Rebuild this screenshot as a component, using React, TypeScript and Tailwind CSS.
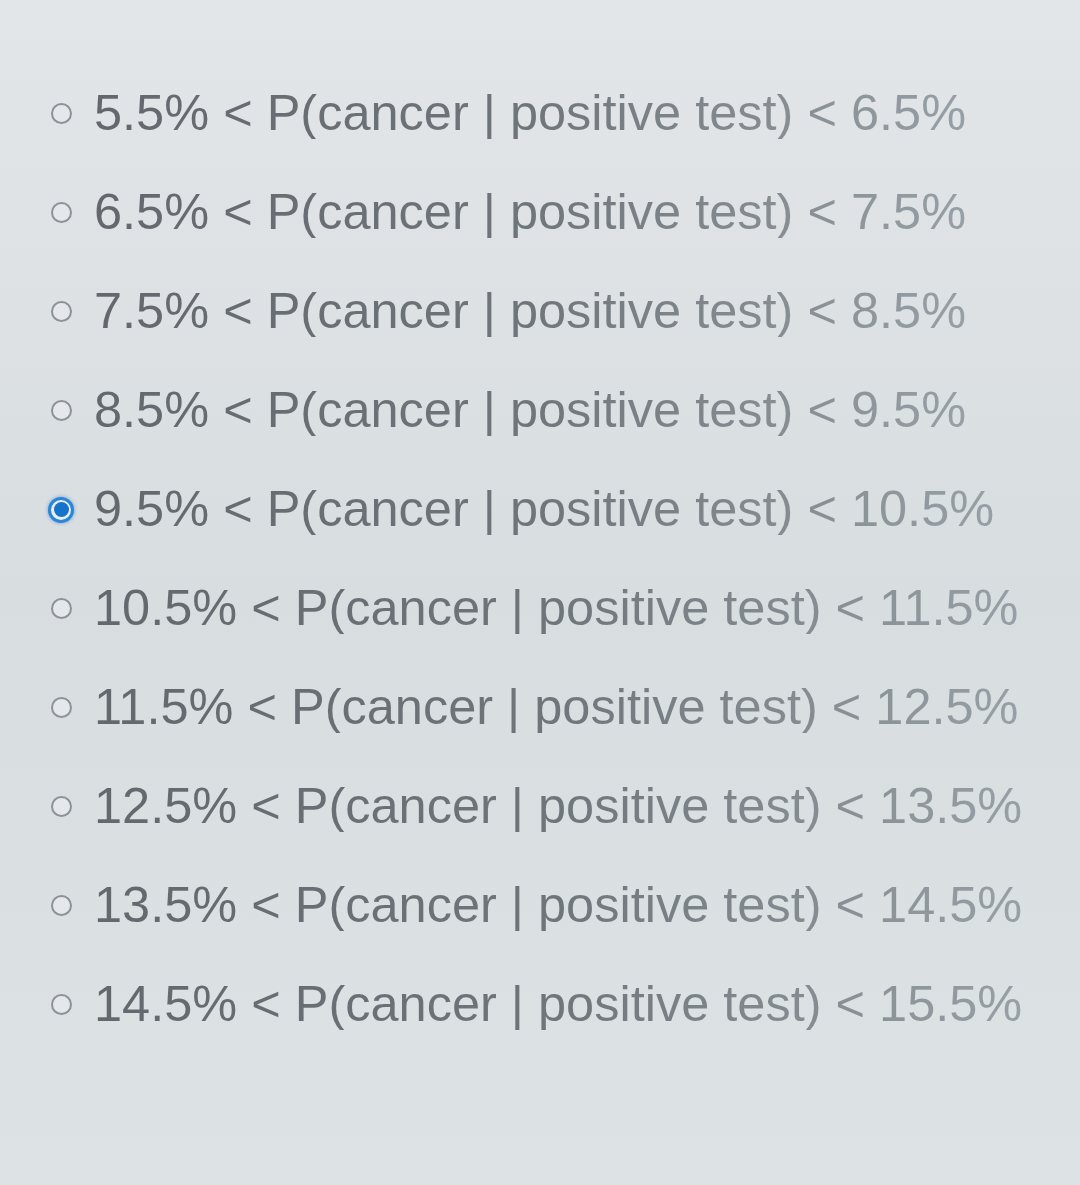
const options = [
  ['5.5%', '6.5%'],
  ['6.5%', '7.5%'],
  ['7.5%', '8.5%'],
  ['8.5%', '9.5%'],
  ['9.5%', '10.5%'],
  ['10.5%', '11.5%'],
  ['11.5%', '12.5%'],
  ['12.5%', '13.5%'],
  ['13.5%', '14.5%'],
  ['14.5%', '15.5%'],
];

function Radio({ checked }: { checked: boolean }) {
  return (
    <span className="flex items-center justify-center w-[26px] h-[26px]">
      {checked ? (
        <span className="flex items-center justify-center w-[26px] h-[26px] rounded-full bg-[#2b86d6] shadow-[0_0_3px_1px_rgba(80,150,220,0.5)]">
          <span className="flex items-center justify-center w-[20px] h-[20px] rounded-full bg-[#e8eef3]">
            <span className="w-[15px] h-[15px] rounded-full bg-[#1673c9]"></span>
          </span>
        </span>
      ) : (
        <span className="w-[21px] h-[21px] rounded-full border-[2.5px] border-[#8c9398] bg-[#e4e8eb]"></span>
      )}
    </span>
  );
}

export default function App() {
  return (
    <div
      className="w-[1080px] h-[1185px] overflow-hidden bg-gradient-to-b from-[#e2e6e9] via-[#d8dde0] to-[#dde2e5] pt-[64px] pl-[48px]"
      style={{ fontFamily: '"Liberation Sans", Arial, sans-serif' }}
    >
      {options.map(([lo, hi], i) => (
        <label key={lo} className="flex items-center h-[99px] gap-[20px]">
          <Radio checked={i === 4} />
          <span className="text-[50.5px] leading-none bg-gradient-to-r from-[#62686d] via-[#6f767b] to-[#97a0a6] bg-clip-text text-transparent">
            {lo} &lt; P(cancer | positive test) &lt; {hi}
          </span>
        </label>
      ))}
    </div>
  );
}
